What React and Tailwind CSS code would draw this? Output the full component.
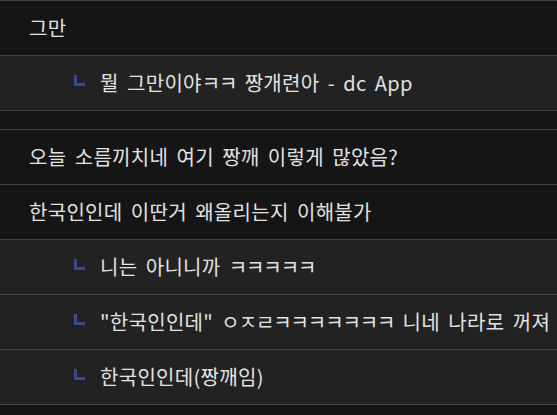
import React from "react";

const rows = [
  { t: "그만", reply: false },
  { t: "뭘 그만이야ㅋㅋ 짱개련아 - dc App", reply: true },
  { spacer: true },
  { t: "오늘 소름끼치네 여기 짱깨 이렇게 많았음?", reply: false },
  { t: "한국인인데 이딴거 왜올리는지 이해불가", reply: false },
  { t: "니는 아니니까 ㅋㅋㅋㅋㅋ", reply: true },
  { t: "\"한국인인데\" ㅇㅈㄹㅋㅋㅋㅋㅋㅋㅋ 니네 나라로 꺼져", reply: true },
  { t: "한국인인데(짱깨임)", reply: true },
];

function ReplyIcon() {
  return (
    <svg width="11" height="11" viewBox="0 0 11 11" className="shrink-0">
      <path d="M1.5 0 V9.5 H11" fill="none" stroke="#3c4a92" strokeWidth="3" />
    </svg>
  );
}

function Text({ t }) {
  const parts = t.split(/([\u3131-\u318E]+)/);
  return (
    <span>
      {parts.map((p, i) =>
        /^[\u3131-\u318E]+$/.test(p) ? (
          <span key={i} className="tracking-[-1.1px]">{p}</span>
        ) : (
          <React.Fragment key={i}>{p}</React.Fragment>
        )
      )}
    </span>
  );
}

export default function App() {
  return (
    <div
      className="w-[557px] h-[415px] bg-[#151515] overflow-hidden border-t border-[#444]"
      style={{ fontFamily: '"Noto Sans CJK KR", "Noto Sans", sans-serif' }}
    >
      {rows.map((r, i) =>
        r.spacer ? (
          <div key={i} className="h-[19px] bg-[#151515] border-b border-[#444]" />
        ) : (
          <div
            key={i}
            className={`h-[55px] border-b border-[#444] flex items-center whitespace-nowrap text-[20px] tracking-[0.3px] [word-spacing:3.5px] text-[#e2e2e2] ${
              r.reply ? "bg-[#222222] pl-[74px]" : "bg-[#151515] pl-[29px]"
            }`}
          >
            {r.reply && (
              <span className="mr-[15px] flex items-center -mt-[6px]">
                <ReplyIcon />
              </span>
            )}
            <Text t={r.t} />
          </div>
        )
      )}
    </div>
  );
}
